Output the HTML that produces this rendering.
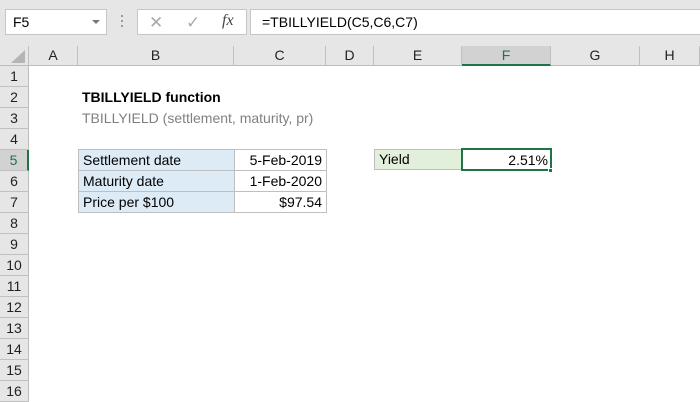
<!DOCTYPE html>
<html><head><meta charset="utf-8"><style>
*{margin:0;padding:0;box-sizing:border-box}
body{width:700px;height:400px;overflow:hidden;background:#fff;font-family:"Liberation Sans",Calibri,sans-serif;font-size:14px;color:#000;position:relative}
.a{position:absolute}
.top{left:0;top:0;width:700px;height:46px;background:#e6e6e6}
.box{background:#fff;border:1px solid #c6c6c6}
.ch{top:46px;height:20px;background:#e6e6e6;border-right:1px solid #c0c0c0;border-bottom:1px solid #bcbcbc;text-align:center;line-height:19px;font-size:14px;color:#222}
.rh{left:0;width:29px;height:21px;background:#e6e6e6;border-right:1px solid #bcbcbc;border-bottom:1px solid #c0c0c0;text-align:center;line-height:21px;font-size:14px;color:#222}
.c{height:21px;line-height:21px;padding:0 4px;white-space:nowrap}
table{border-collapse:collapse;position:absolute}
td{border:1px solid #bfbfbf;height:21px;padding:0 4px;white-space:nowrap;line-height:19px}
</style></head><body>
<div class="a top"></div>
<div class="a box" style="left:5px;top:9px;width:102px;height:26px;line-height:24px;padding-left:7px">F5</div>
<div class="a" style="left:92px;top:20px;width:0;height:0;border-left:4px solid transparent;border-right:4px solid transparent;border-top:4px solid #777"></div>
<div class="a" style="left:121px;top:15px;width:2px;height:2px;background:#999;box-shadow:0 5px #999,0 10px #999"></div>
<div class="a box" style="left:137px;top:9px;width:110px;height:26px"></div>
<div class="a" style="left:149px;top:13px;color:#aaa;font-size:17px">✕</div>
<div class="a" style="left:186px;top:13px;color:#aaa;font-size:17px">✓</div>
<div class="a" style="left:222px;top:12px;font-family:'Liberation Serif',serif;font-style:italic;font-size:16px;color:#444">fx</div>
<div class="a box" style="left:250px;top:9px;width:452px;height:26px;line-height:24px;padding-left:11px">=TBILLYIELD(C5,C6,C7)</div>

<div class="a ch" style="left:0;width:29px"></div>
<div class="a" style="left:11px;top:50px;width:0;height:0;border-left:14px solid transparent;border-bottom:13px solid #b5b5b5"></div>
<div class="a ch" style="left:29px;width:49px">A</div>
<div class="a ch" style="left:78px;width:156px">B</div>
<div class="a ch" style="left:234px;width:92px">C</div>
<div class="a ch" style="left:326px;width:48px">D</div>
<div class="a ch" style="left:374px;width:88px">E</div>
<div class="a ch" style="left:462px;width:89px;background:#d2d2d2;border-bottom:2px solid #217346;color:#217346">F</div>
<div class="a ch" style="left:551px;width:89px">G</div>
<div class="a ch" style="left:640px;width:60px">H</div>

<div class="a rh" style="top:66px">1</div>
<div class="a rh" style="top:87px">2</div>
<div class="a rh" style="top:108px">3</div>
<div class="a rh" style="top:129px">4</div>
<div class="a rh" style="top:150px;background:#d2d2d2;border-right:2px solid #217346;color:#217346">5</div>
<div class="a rh" style="top:171px">6</div>
<div class="a rh" style="top:192px">7</div>
<div class="a rh" style="top:213px">8</div>
<div class="a rh" style="top:234px">9</div>
<div class="a rh" style="top:255px">10</div>
<div class="a rh" style="top:276px">11</div>
<div class="a rh" style="top:297px">12</div>
<div class="a rh" style="top:318px">13</div>
<div class="a rh" style="top:339px">14</div>
<div class="a rh" style="top:360px">15</div>
<div class="a rh" style="top:381px">16</div>

<div class="a c" style="left:78px;top:87px;font-weight:bold">TBILLYIELD function</div>
<div class="a c" style="left:78px;top:108px;color:#808080">TBILLYIELD (settlement, maturity, pr)</div>

<table style="left:78px;top:149px">
<tr><td style="width:156px;background:#ddebf7">Settlement date</td><td style="width:92px;text-align:right">5-Feb-2019</td></tr>
<tr><td style="background:#ddebf7">Maturity date</td><td style="text-align:right">1-Feb-2020</td></tr>
<tr><td style="background:#ddebf7">Price per $100</td><td style="text-align:right">$97.54</td></tr>
</table>

<div class="a c" style="left:374px;top:149px;width:89px;background:#e2efda;border:1px solid #bfbfbf;line-height:19px">Yield</div>
<div class="a c" style="left:461px;top:148px;width:91px;height:23px;line-height:20px;text-align:right;border:2px solid #217346;padding-right:2px">2.51%</div>
<div class="a" style="left:548px;top:168px;width:5px;height:5px;background:#217346;border:1px solid #fff"></div>
</body></html>
